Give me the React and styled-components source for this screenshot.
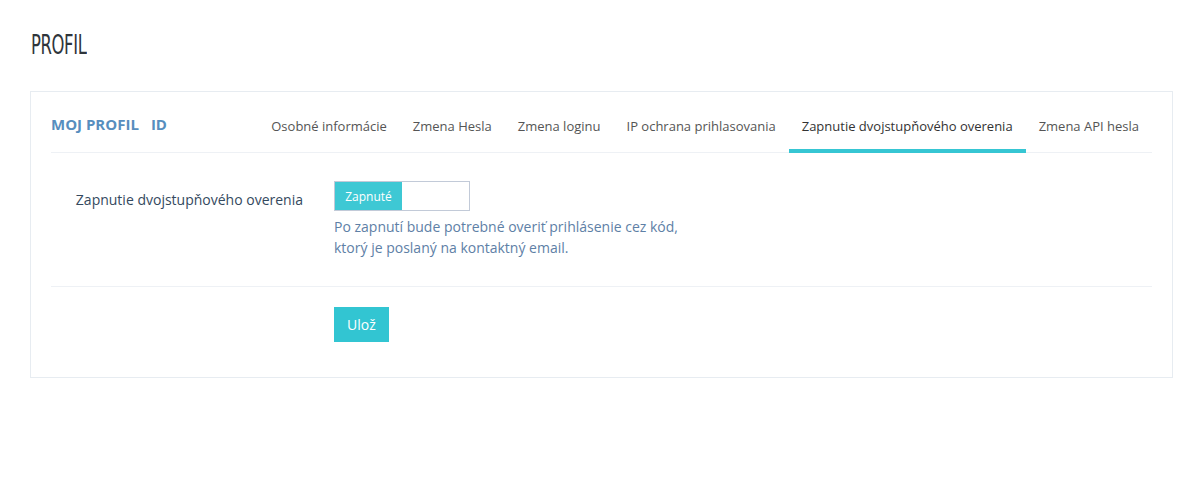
import React from "react";
import styled, { createGlobalStyle } from "styled-components";

const Global = createGlobalStyle`
  html, body { margin: 0; padding: 0; background: #fff; }
  body { font-family: "Open Sans", "Noto Sans", sans-serif; color: #333; }
`;

const Page = styled.div`
  padding: 27px 30px 0 30px;
  width: 1143px;
`;

const Title = styled.h1`
  margin: 0 0 27px 1px;
  font-family: "Liberation Sans Narrow", "DejaVu Sans Condensed", "Liberation Sans", sans-serif;
  font-stretch: condensed;
  font-weight: 400;
  font-size: 26px;
  line-height: 37px;
  color: #2f353b;
  letter-spacing: -0.5px;
  transform: scaleX(0.7);
  transform-origin: left center;
`;

const Card = styled.div`
  border: 1px solid #e7ecf1;
  padding: 0 20px 35px 20px;
`;

const Header = styled.div`
  display: flex;
  align-items: stretch;
  justify-content: space-between;
  border-bottom: 1px solid #eef1f5;
  height: 60px;
`;

const Caption = styled.div`
  display: flex;
  align-items: center;
  gap: 12px;
  padding-top: 4px;
  font-size: 15px;
  font-weight: 700;
  color: #578ebe;
  text-transform: uppercase;
`;

const Tabs = styled.ul`
  display: flex;
  margin: 0;
  padding: 0;
  list-style: none;
`;

const Tab = styled.li`
  display: flex;
  align-items: center;
  padding: 10px 13px 0 13px;
  font-size: 13px;
  color: ${(p) => (p.$active ? "#333" : "#555")};
  border-bottom: 4px solid ${(p) => (p.$active ? "#36c6d3" : "transparent")};
  margin-bottom: -1px;
  white-space: nowrap;
`;

const Body = styled.div`
  padding: 28px 0 28px 0;
  border-bottom: 1px solid #eef1f5;
`;

const Row = styled.div`
  display: grid;
  grid-template-columns: 283px 1fr;
`;

const Label = styled.label`
  text-align: right;
  padding-right: 31px;
  padding-top: 9px;
  font-size: 14px;
  color: #34495e;
`;

const Toggle = styled.div`
  display: flex;
  width: 134px;
  height: 28px;
  border: 1px solid #c2cad8;
`;

const ToggleOn = styled.div`
  width: 67px;
  background: #3ec8d4;
  color: #fff;
  font-size: 12px;
  display: flex;
  align-items: center;
  justify-content: center;
`;

const Help = styled.p`
  margin: 5px 0 0 0;
  font-size: 14px;
  line-height: 21px;
  color: #5e80a6;
`;

const Actions = styled.div`
  display: grid;
  grid-template-columns: 283px 1fr;
  padding-top: 20px;
`;

const Button = styled.button`
  grid-column: 2;
  justify-self: start;
  border: 0;
  background: #32c5d2;
  color: #fff;
  font-family: "Open Sans", sans-serif;
  font-size: 14px;
  height: 35px;
  padding: 0 13px;
  cursor: pointer;
`;

const tabs = [
  "Osobné informácie",
  "Zmena Hesla",
  "Zmena loginu",
  "IP ochrana prihlasovania",
  "Zapnutie dvojstupňového overenia",
  "Zmena API hesla",
];

export default function App() {
  return (
    <>
      <Global />
      <Page>
        <Title>PROFIL</Title>
        <Card>
          <Header>
            <Caption>
              <span>Moj profil</span>
              <span>ID</span>
            </Caption>
            <Tabs>
              {tabs.map((t, i) => (
                <Tab key={t} $active={i === 4}>
                  {t}
                </Tab>
              ))}
            </Tabs>
          </Header>
          <Body>
            <Row>
              <Label>Zapnutie dvojstupňového overenia</Label>
              <div>
                <Toggle>
                  <ToggleOn>Zapnuté</ToggleOn>
                </Toggle>
                <Help>
                  Po zapnutí bude potrebné overiť prihlásenie cez kód,
                  <br />
                  ktorý je poslaný na kontaktný email.
                </Help>
              </div>
            </Row>
          </Body>
          <Actions>
            <Button>Ulož</Button>
          </Actions>
        </Card>
      </Page>
    </>
  );
}
